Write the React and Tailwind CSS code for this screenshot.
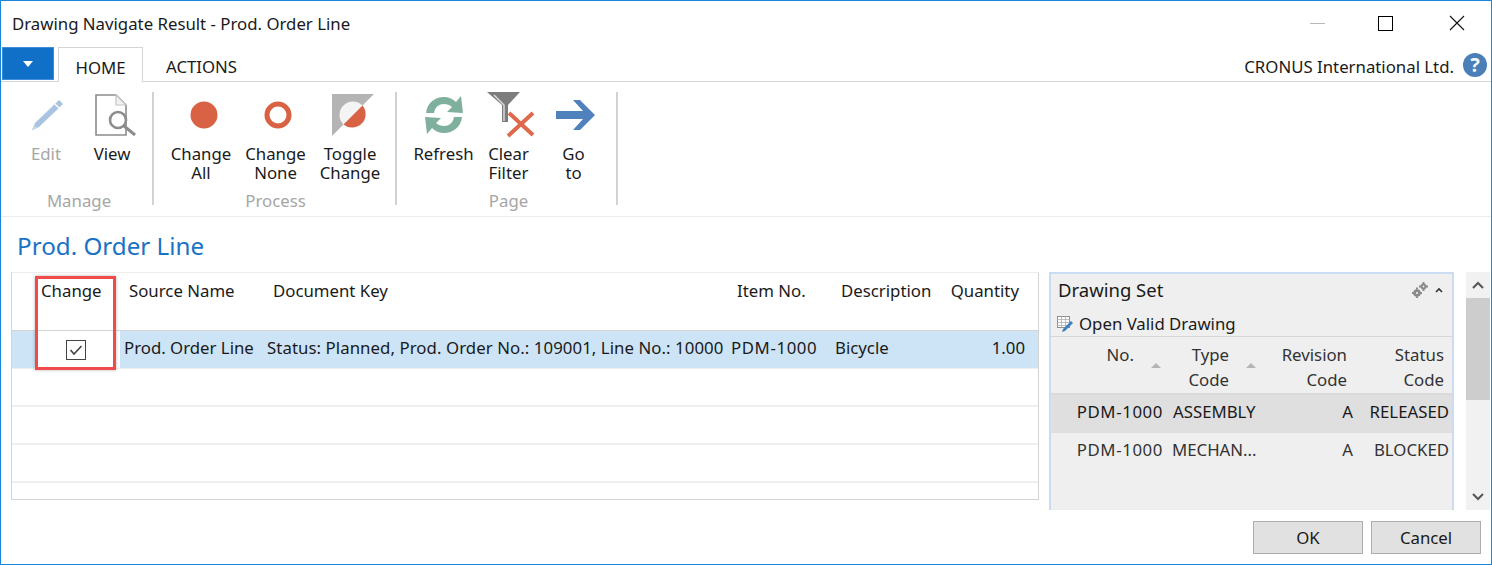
import React from 'react';

const EditIcon = () => (
  <svg width="38" height="38" viewBox="0 0 38 38">
    <path d="M32 4 L36 8 L12 31 L5 34 L8 27 Z" fill="#a9c4e0" />
    <path d="M28 8 L32 12" stroke="#fff" strokeWidth="1.5" />
    <path d="M5 34 L7 29 L10 32 Z" fill="#c9d8e8" />
  </svg>
);

const ViewIcon = () => (
  <svg width="42" height="42" viewBox="0 0 42 42" fill="none">
    <path d="M1 1 H21 L31 11 V41 H1 Z" stroke="#8c8c8c" strokeWidth="1.6" fill="#fff" />
    <path d="M21 1 V11 H31 Z" stroke="#c4c4c4" strokeWidth="1.2" fill="#f2f2f2" />
    <circle cx="23" cy="26" r="8" stroke="#8c8c8c" strokeWidth="2.6" fill="#fff" />
    <path d="M29 32 L40 41" stroke="#8c8c8c" strokeWidth="3" />
  </svg>
);

const FullCircle = () => (
  <svg width="28" height="28" viewBox="0 0 28 28"><circle cx="14" cy="14" r="13.5" fill="#d96244" /></svg>
);

const EmptyCircle = () => (
  <svg width="28" height="28" viewBox="0 0 28 28"><circle cx="14" cy="14" r="11" fill="#fff" stroke="#d96244" strokeWidth="5" /></svg>
);

const ToggleIcon = () => (
  <svg width="42" height="42" viewBox="0 0 42 42">
    <path d="M0 0 H42 L0 42 Z" fill="#b4b4b4" />
    <circle cx="21" cy="21" r="13.5" fill="#f4f4f4" />
    <path d="M30.5 11.5 A13.5 13.5 0 0 1 11.5 30.5 Z" fill="#d96244" />
  </svg>
);

const RefreshIcon = () => (
  <svg width="40" height="40" viewBox="0 0 40 40" fill="#7faf9d">
    <path d="M2 18 C3 8 11 2 20 2 C25 2 29 4 32 7 L37 1 L39 18 L23 17 L28 12 C26 10 23 9 20 9 C15 9 11 12 10 18 Z" />
    <path d="M38 22 C37 32 29 38 20 38 C15 38 11 36 8 33 L3 39 L1 22 L17 23 L12 28 C14 30 17 31 20 31 C25 31 29 28 30 22 Z" />
  </svg>
);

const ClearFilterIcon = () => (
  <svg width="48" height="46" viewBox="0 0 48 46">
    <path d="M0 0 H33 L21 13 V30 H15 V13 Z" fill="#7c7c7c" />
    <path d="M7 3 L17 13 V29" fill="none" stroke="#d8d8d8" strokeWidth="1.5" />
    <path d="M22 21 L46 43 M46 21 L21 44" stroke="#dd6a4d" strokeWidth="4" />
  </svg>
);

const GoToIcon = () => (
  <svg width="40" height="32" viewBox="0 0 40 32">
    <path d="M0 12 H27 L17 1 H24 L39 16 L24 31 H17 L27 20 H0 Z" fill="#4f81bd" />
  </svg>
);

const HelpIcon = () => (
  <div className="flex h-[24px] w-[24px] -translate-y-px items-center justify-center rounded-full bg-[#4a7fb8] text-[20px] font-bold leading-none text-[#f4f7fb]">?</div>
);

const GearsIcon = () => (
  <svg width="16" height="16" viewBox="0 0 16 16" fill="#8a8a8a">
    <circle cx="5" cy="11" r="3.8" />
    <circle cx="11.5" cy="4.5" r="3" />
    <circle cx="5" cy="11" r="1.1" fill="#efefef" />
    <circle cx="11.5" cy="4.5" r="0.9" fill="#efefef" />
    <path d="M4 5.5h2v2H4zM4 14.5h2v1.5H4zM0 10h2v2H0zM8 10h2v2H8zM10.5 0h2v2h-2zM10.5 7h2v2h-2zM7 3.5h2v2H7zM14 3.5h2v2h-2z" />
  </svg>
);

const SheetEditIcon = () => (
  <svg width="16" height="16" viewBox="0 0 16 16">
    <rect x="0.5" y="0.5" width="12" height="11" fill="#fff" stroke="#8f8f8f" />
    <path d="M0.5 3.5h12M0.5 6.5h12M0.5 9.5h12M4.5 0.5v11M8.5 0.5v11" stroke="#b0b0b0" strokeWidth="0.8" />
    <path d="M14 5 L16 7 L8 15 L5 16 L6 13 Z" fill="#3f7fc4" />
  </svg>
);

const SortArrow = () => (
  <span className="mt-[21px] h-0 w-0 border-x-[5px] border-b-[5px] border-x-transparent border-b-[#b5b5b5]" />
);

const RibbonButton = ({ icon, children, disabled, width, iconClass = '' }) => (
  <div className={`flex flex-col items-center ${width}`}>
    <div className={`flex h-[46px] items-center justify-center ${iconClass}`}>{icon}</div>
    <div className={`mt-[6px] text-center leading-[19px] ${disabled ? 'text-[#a6a6a6]' : 'text-[#1a1a1a]'}`}>
      {children}
    </div>
  </div>
);

const RibbonGroup = ({ label, width, pad, children }) => (
  <div className={`flex h-[113px] flex-col border-r-2 border-[#d2d2d2] ${width} ${pad}`}>
    <div className="flex h-[99px] shrink-0 items-start">{children}</div>
    <div className="shrink-0 text-center leading-[19px] text-[#a6a6a6]">{label}</div>
  </div>
);

const gridCols = 'grid-cols-[24px_84px_144px_464px_104px_92px_114px]';
const setCols = 'grid-cols-[114px_96px_100px_92px]';

const EmptyRow = () => <div className="h-[38px] border-b-2 border-[#efefef]" />;

export default function App() {
  return (
    <div className="relative flex h-[565px] w-[1492px] flex-col overflow-hidden border border-[#1a86d9] bg-white font-['Noto_Sans',sans-serif] text-[16.8px] text-[#1a1a1a]">
      {/* Title bar */}
      <div className="flex h-[46px] shrink-0 items-center justify-between pb-[2px] pl-[11px] pr-[26px]">
        <span className="mt-[2px]">Drawing Navigate Result - Prod. Order Line</span>
        <div className="flex items-center">
          <span className="mr-[53px] h-px w-[15px] bg-[#b8b8b8]" />
          <span className="mr-[56px] h-[15px] w-[15px] border-[1.5px] border-black" />
          <svg width="16" height="16" viewBox="0 0 16 16" stroke="#111" strokeWidth="1.1"><path d="M1 1 L15 15 M15 1 L1 15" /></svg>
        </div>
      </div>

      {/* Tabs */}
      <div className="flex h-[35px] shrink-0 items-end justify-between border-b border-[#d5d5d5] pr-[4px]">
        <div className="flex h-full items-end">
          <div className="mb-px ml-[1px] flex h-[33px] w-[52px] items-center justify-center border border-[#3f8bdc] bg-[#1070c8]">
            <span className="h-0 w-0 border-x-[5px] border-t-[6px] border-x-transparent border-t-white" />
          </div>
          <div className="relative top-px ml-[4px] flex h-[35px] w-[85px] items-center justify-center border-x border-t border-[#d5d5d5] bg-white pt-[5px]">HOME</div>
          <div className="flex h-[34px] items-center pl-[23px] pt-[5px]">ACTIONS</div>
        </div>
        <div className="flex items-center gap-[9px] pb-[2px]">
          <span>CRONUS International Ltd.</span>
          <HelpIcon />
        </div>
      </div>

      {/* Ribbon */}
      <div className="flex h-[135px] shrink-0 border-b border-[#ececec] pt-[10px]">
        <RibbonGroup label="Manage" width="w-[153px]" pad="pl-[12px] pr-[7px]">
          <RibbonButton width="w-[66px]" disabled icon={<EditIcon />}>Edit</RibbonButton>
          <RibbonButton width="w-[66px]" iconClass="pl-[7px]" icon={<ViewIcon />}>View</RibbonButton>
        </RibbonGroup>
        <RibbonGroup label="Process" width="w-[243px]" pad="pl-[10px] pr-[8px]">
          <RibbonButton width="w-[74px]" iconClass="pl-[5px]" icon={<FullCircle />}>Change<br />All</RibbonButton>
          <RibbonButton width="w-[75px]" iconClass="pl-[4px]" icon={<EmptyCircle />}>Change<br />None</RibbonButton>
          <RibbonButton width="w-[74px]" iconClass="pl-[5px]" icon={<ToggleIcon />}>Toggle<br />Change</RibbonButton>
        </RibbonGroup>
        <RibbonGroup label="Page" width="w-[221px]" pad="pl-[14px] pr-[10px]">
          <RibbonButton width="w-[65px]" icon={<RefreshIcon />}>Refresh</RibbonButton>
          <RibbonButton width="w-[65px]" iconClass="pl-[4px]" icon={<ClearFilterIcon />}>Clear<br />Filter</RibbonButton>
          <RibbonButton width="w-[65px]" iconClass="pl-[4px]" icon={<GoToIcon />}>Go<br />to</RibbonButton>
        </RibbonGroup>
      </div>

      {/* Heading */}
      <div className="flex h-[55px] shrink-0 items-start pl-[16px] pt-[14px] text-[24.2px] leading-[30px] text-[#1a72c4]">Prod. Order Line</div>

      {/* Body */}
      <div className="flex h-[238px] shrink-0 overflow-hidden pl-[10px]">
        <div className="h-[228px] w-[1028px] border border-[#d4d4d4] border-t-[#ececec]">
          <div className={`grid h-[58px] ${gridCols} border-b border-[#d4d4d4]`}>
            <div />
            <div className="pl-[5px] pt-[5px]">Change</div>
            <div className="pl-[9px] pt-[5px]">Source Name</div>
            <div className="pl-[9px] pt-[5px]">Document Key</div>
            <div className="pl-[9px] pt-[5px]">Item No.</div>
            <div className="pl-[9px] pt-[5px]">Description</div>
            <div className="pr-[19px] pt-[5px] text-right">Quantity</div>
          </div>
          <div className={`grid h-[38px] ${gridCols} items-center border-b border-[#efefef] bg-[#cde4f7]`}>
            <div className="h-full" />
            <div className="flex h-full items-center justify-center bg-white pr-[4px]">
              <div className="flex h-[20px] w-[20px] items-center justify-center border border-[#444] bg-white">
                <svg width="14" height="12" viewBox="0 0 14 12" fill="none" stroke="#444" strokeWidth="1.6"><path d="M1.5 6 L5 10 L12.5 2" /></svg>
              </div>
            </div>
            <div className="pb-[4px] pl-[4px]">Prod. Order Line</div>
            <div className="truncate pb-[4px] pl-[3px] tracking-[0.07px]">Status: Planned, Prod. Order No.: 109001, Line No.: 10000</div>
            <div className="pb-[4px] pl-[3px] tracking-[0.6px]">PDM-1000</div>
            <div className="pb-[4px] pl-[3px]">Bicycle</div>
            <div className="pb-[4px] pr-[13px] text-right">1.00</div>
          </div>
          <EmptyRow />
          <EmptyRow />
          <EmptyRow />
        </div>

        {/* Drawing Set factbox */}
        <div className="ml-[10px] h-[240px] w-[405px] shrink-0 border-2 border-b-0 border-[#c9dcf2] bg-[#efefef]">
          <div className="flex h-[33px] items-center justify-between pb-[2px] pl-[7px] pr-[9px] text-[18.5px]">
            <span>Drawing Set</span>
            <div className="flex items-center gap-[7px]">
              <GearsIcon />
              <svg width="8" height="6" viewBox="0 0 8 6" fill="none" stroke="#333" strokeWidth="1.6"><path d="M1 5 L4 2 L7 5" /></svg>
            </div>
          </div>
          <div className="flex h-[30px] items-center gap-[6px] border-b border-[#d6d6d6] pl-[6px] pt-[4px]">
            <SheetEditIcon />
            <span>Open Valid Drawing</span>
          </div>
          <div className={`grid h-[58px] ${setCols} border-b-2 border-[#dadada] pt-[5px] leading-[25px] text-[#333]`}>
            <div className="flex items-start justify-end gap-[17px] pr-[4px]">
              <span>No.</span>
              <SortArrow />
            </div>
            <div className="flex items-start justify-end gap-[17px] pr-[5px]">
              <span className="text-right">Type<br />Code</span>
              <SortArrow />
            </div>
            <div className="pr-[14px] text-right">Revision<br />Code</div>
            <div className="pr-[9px] text-right">Status<br />Code</div>
          </div>
          <div className={`grid h-[38px] ${setCols} items-center bg-[#dfdfdf]`}>
            <div className="pb-[4px] pr-[2px] text-right tracking-[0.6px]">PDM-1000</div>
            <div className="pb-[4px] pl-[8px]">ASSEMBLY</div>
            <div className="pb-[4px] pr-[8px] text-right">A</div>
            <div className="pb-[4px] pr-[4px] text-right">RELEASED</div>
          </div>
          <div className={`grid h-[38px] ${setCols} items-center text-[#333]`}>
            <div className="pb-[4px] pr-[2px] text-right tracking-[0.6px]">PDM-1000</div>
            <div className="pb-[4px] pl-[7px]">MECHAN...</div>
            <div className="pb-[4px] pr-[8px] text-right">A</div>
            <div className="pb-[4px] pr-[4px] text-right">BLOCKED</div>
          </div>
        </div>

        {/* Scrollbar */}
        <div className="ml-[12px] flex h-[238px] w-[24px] shrink-0 flex-col bg-[#f1f1f1]">
          <div className="flex h-[26px] items-center justify-center">
            <svg width="12" height="8" viewBox="0 0 12 8" fill="none" stroke="#555" strokeWidth="2"><path d="M1 7 L6 2 L11 7" /></svg>
          </div>
          <div className="h-[102px] bg-[#cdcdcd]" />
          <div className="flex-1" />
          <div className="flex h-[26px] items-center justify-center">
            <svg width="12" height="8" viewBox="0 0 12 8" fill="none" stroke="#555" strokeWidth="2"><path d="M1 1 L6 6 L11 1" /></svg>
          </div>
        </div>
      </div>

      {/* Footer buttons */}
      <div className="flex flex-1 items-start justify-end gap-[8px] pr-[10px] pt-[11px]">
        <button className="h-[33px] w-[110px] border border-[#adadad] bg-[#e1e1e1]">OK</button>
        <button className="h-[33px] w-[110px] border border-[#adadad] bg-[#e1e1e1]">Cancel</button>
      </div>

      {/* Red highlight drawn over the Change column */}
      <div className="pointer-events-none absolute left-[34px] top-[275px] h-[94px] w-[81px] border-[3px] border-[#f04b4b] shadow-[0_0_3px_rgba(0,0,0,0.3)]" />
    </div>
  );
}
